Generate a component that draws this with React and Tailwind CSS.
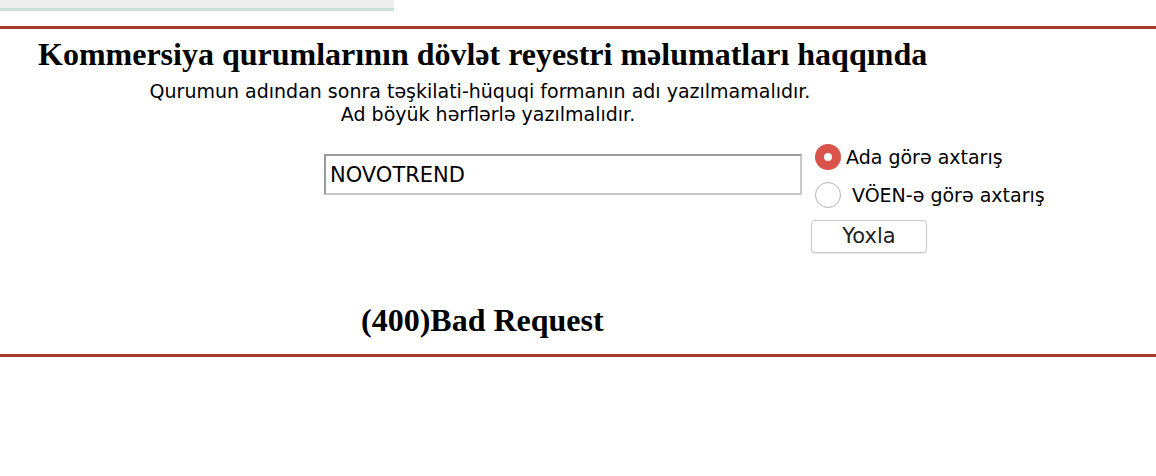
export default function App() {
  return (
    <div className="w-[1156px] h-[476px] bg-white overflow-hidden">
      <div className="w-[394px] h-[8px] bg-[#eeeeee]" />
      <div className="w-[394px] h-[3px] bg-[#c9ddd9]" />
      <div className="h-[15px]" />
      <div className="h-[3px] bg-[#a63c2e]" />
      <h1 className="pl-[38px] pt-[7px] text-[32px] leading-[36px] font-bold text-black font-['Liberation_Serif',serif]">
        Kommersiya qurumlarının dövlət reyestri məlumatları haqqında
      </h1>
      <div className="w-[960px] text-center text-[19px] leading-[23px] text-black font-['DejaVu_Sans',sans-serif] mt-[8px]">
        <p>Qurumun adından sonra təşkilati-hüquqi formanın adı yazılmamalıdır.</p>
        <p className="pl-[16px]">Ad böyük hərflərlə yazılmalıdır.</p>
      </div>
      <div className="flex items-start pl-[324px] mt-[18px] font-['DejaVu_Sans',sans-serif]">
        <input
          readOnly
          value="NOVOTREND"
          className="mt-[10px] w-[478px] h-[41px] border-2 border-t-[#9a9a9a] border-l-[#9a9a9a] border-r-[#c8c8c8] border-b-[#c8c8c8] px-[4px] text-[21px] text-black outline-none font-['DejaVu_Sans',sans-serif]"
        />
        <div className="ml-[13px] flex flex-col">
          <label className="flex items-center h-[26px] text-[19px] text-black">
            <span className="w-[26px] h-[26px] rounded-full bg-[#d9534a] flex items-center justify-center">
              <span className="w-[8px] h-[8px] rounded-full bg-white" />
            </span>
            <span className="ml-[5px]">Ada görə axtarış</span>
          </label>
          <label className="flex items-center h-[26px] mt-[12px] text-[19px] text-black">
            <span className="w-[26px] h-[26px] rounded-full border border-[#b5b5b5] bg-white" />
            <span className="ml-[11px]">VÖEN-ə görə axtarış</span>
          </label>
          <button className="mt-[12px] -ml-[4px] w-[116px] h-[33px] rounded-[4px] border border-[#c9c9c9] bg-white text-[21px] text-[#222] shadow-[0_1px_1px_rgba(0,0,0,0.1)]">
            Yoxla
          </button>
        </div>
      </div>
      <h2 className="pl-[361px] mt-[49px] text-[32px] leading-[36px] font-bold text-black font-['Liberation_Serif',serif]">
        (400)Bad Request
      </h2>
      <div className="mt-[16px] h-[3px] bg-[#a63c2e]" />
    </div>
  );
}
